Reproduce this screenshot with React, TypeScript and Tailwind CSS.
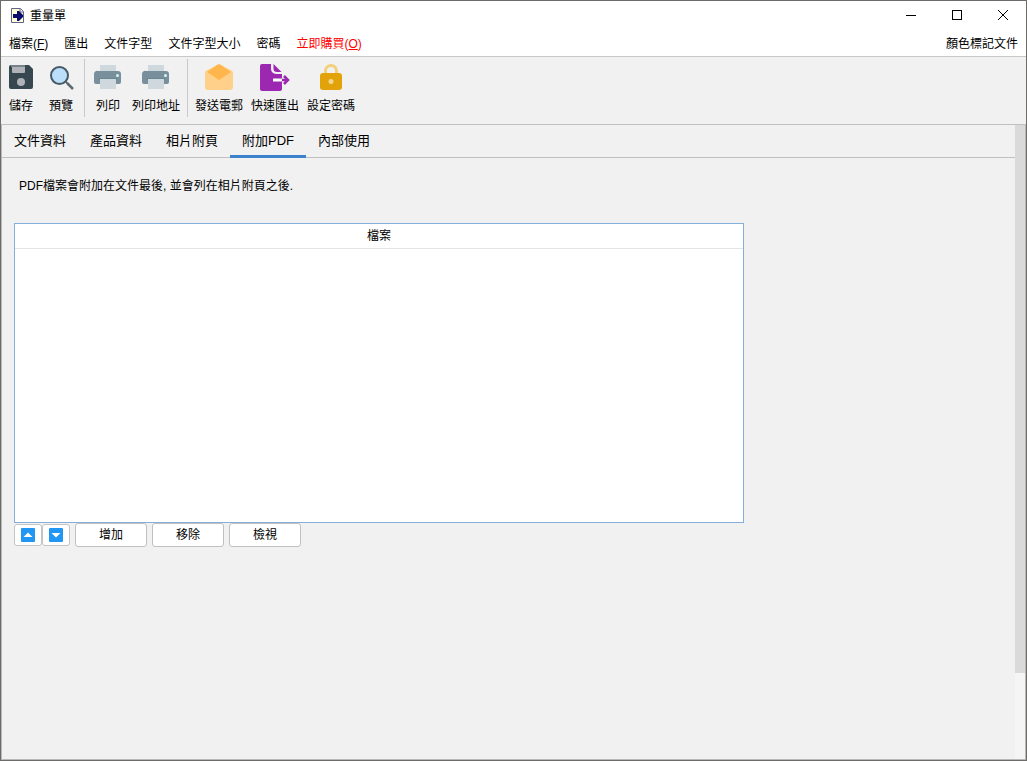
import React, { useState } from "react";

const tabs = ["文件資料", "產品資料", "相片附頁", "附加PDF", "內部使用"];

const menus = ["匯出", "文件字型", "文件字型大小", "密碼"];

const AppIcon = () => (
  <svg width="13" height="15" viewBox="0 0 13 15">
    <path d="M.5.5h9l3 3v11H.5z" fill="#fffdd8" stroke="#62628a" />
    <path d="M9 1v3h3" fill="#fff" stroke="#62628a" />
    <path d="M2 6h4V3h2l4 4v2l-4 4H6v-3H2z" fill="#0c0c6c" />
  </svg>
);

const SaveIcon = () => (
  <svg width="24" height="24" viewBox="0 0 24 24">
    <path d="M2 0h18l4 4v18a2 2 0 0 1-2 2H2a2 2 0 0 1-2-2V2a2 2 0 0 1 2-2z" fill="#37474f" />
    <path d="M3 0h13v7a1 1 0 0 1-1 1H4a1 1 0 0 1-1-1z" fill="#b0b2b8" />
    <path d="M2 0h14v2H2z" fill="#78828a" />
    <circle cx="12" cy="17" r="4" fill="#b0b2b8" />
  </svg>
);

const PreviewIcon = () => (
  <svg width="24" height="24" viewBox="0 0 24 24" className="overflow-visible">
    <path d="M17 17l3 3" stroke="#616161" strokeWidth="2" />
    <path d="M18.500 18.500l5.500 5.500" stroke="#5b6b75" strokeWidth="2.500" />
    <circle cx="10.500" cy="10.500" r="8.500" fill="#bbdefb" stroke="#455a64" strokeWidth="2" />
  </svg>
);

const PrintIcon = () => (
  <svg width="28" height="24" viewBox="0 0 28 24">
    <path d="M6 0h16v8H6z" fill="#cfd8dc" />
    <path d="M4 6h20a3 3 0 0 1 3 3v8a2 2 0 0 1-2 2H2a2 2 0 0 1-2-2V9a3 3 0 0 1 4-3z" fill="#78909c" />
    <path d="M5 13h18v2H5z" fill="#6b8592" />
    <path d="M6 14h16v10H6z" fill="#cfd8dc" />
    <circle cx="23.500" cy="10.500" r="1.500" fill="#d9f3f5" />
  </svg>
);

const MailIcon = () => (
  <svg width="28" height="26" viewBox="0 0 28 26">
    <path d="M1.500 6.500L12.500.7a3 3 0 0 1 3 0l11 5.800A3 3 0 0 1 28 9v14a3 3 0 0 1-3 3H3a3 3 0 0 1-3-3V9a3 3 0 0 1 1.500-2.500z" fill="#ffd08a" />
    <path d="M2 8L12.500.7a3 3 0 0 1 3 0L26 8l-12 8z" fill="#ffb74d" />
  </svg>
);

const ExportIcon = () => (
  <svg width="30" height="27" viewBox="0 0 30 27">
    <path d="M2 0h9v5a5 5 0 0 0 5 5h6v15a2 2 0 0 1-2 2H2a2 2 0 0 1-2-2V2a2 2 0 0 1 2-2z" fill="#9c27b0" />
    <path d="M13.500 0l8 8H17a3.500 3.500 0 0 1-3.500-3.500z" fill="#9c27b0" />
    <path d="M13 14.500h9v3h-9z" fill="#fff" />
    <path d="M22 16h6M24 12l4 4-4 4" fill="none" stroke="#9c27b0" strokeWidth="2.500" />
  </svg>
);

const LockIcon = () => (
  <svg width="22" height="26" viewBox="0 0 22 26">
    <path d="M5.500 11V7a5.500 5.500 0 0 1 11 0v4" fill="none" stroke="#f3cf7a" strokeWidth="3" />
    <rect y="9" width="22" height="17" rx="3" fill="#e2a30a" />
    <circle cx="11" cy="17.500" r="2.500" fill="#f3d68f" />
  </svg>
);

const ArrowIcon = ({ down = false }: { down?: boolean }) => (
  <svg width="14" height="14" viewBox="0 0 14 14">
    <rect width="14" height="14" rx="1" fill="#2196f3" />
    <path d={down ? "M2.500 5h9L7 9.500z" : "M2.500 9h9L7 4.500z"} fill="#fff" />
  </svg>
);

interface ToolButtonProps {
  label: string;
  children: React.ReactNode;
}

const ToolButton: React.FC<ToolButtonProps> = ({ label, children }) => (
  <button type="button" className="flex min-w-10 flex-col items-center px-1">
    <span className="flex h-8 items-center justify-center">{children}</span>
    <span className="mt-[5px] text-xs whitespace-nowrap">{label}</span>
  </button>
);

const Separator = () => <div className="mx-[3px] h-[58px] w-px shrink-0 bg-[#c8c8c8]" />;

const smallButton =
  "flex h-[22px] w-7 items-center justify-center rounded-[3px] border border-[#c4c4c4] bg-white";
const textButton =
  "h-6 w-[72px] rounded-[3px] border border-[#c0c0c0] bg-white text-center text-xs";

export default function App() {
  const [activeTab, setActiveTab] = useState("附加PDF");

  return (
    <div className="flex min-h-screen flex-col border border-[#6e6b6b] bg-[#f1f1f1] font-['Liberation_Sans','Noto_Sans_CJK_TC',sans-serif] text-xs text-black">
      <header className="border-b border-[#c8c8c8] bg-white">
        <div className="flex h-7 items-center pl-2.5">
          <AppIcon />
          <h1 className="ml-1.5 flex-1 pt-0.5">重量單</h1>
          <button type="button" aria-label="最小化" className="flex h-7 w-[46px] items-center justify-center">
            <svg width="10" height="10" shapeRendering="crispEdges">
              <path d="M0 5.500h10" stroke="#000" />
            </svg>
          </button>
          <button type="button" aria-label="最大化" className="flex h-7 w-[46px] items-center justify-center">
            <svg width="10" height="10" shapeRendering="crispEdges">
              <path d="M.5.5h9v9h-9z" fill="none" stroke="#000" />
            </svg>
          </button>
          <button type="button" aria-label="關閉" className="flex h-7 w-[46px] items-center justify-center">
            <svg width="10" height="10">
              <path d="M0 0l10 10M10 0L0 10" stroke="#000" />
            </svg>
          </button>
        </div>
        <nav className="flex h-[27px] items-center gap-4 px-2 pt-0.5">
          <button type="button">
            檔案(<u>F</u>)
          </button>
          {menus.map((menu) => (
            <button key={menu} type="button">
              {menu}
            </button>
          ))}
          <button type="button" className="text-[#ff0000]">
            立即購買(<u>O</u>)
          </button>
          <button type="button" className="ml-auto">
            顏色標記文件
          </button>
        </nav>
      </header>

      <div className="flex h-[68px] items-start border-b border-[#c0c0c0] pt-0.5">
        <div className="flex pt-0.5">
          <ToolButton label="儲存"><SaveIcon /></ToolButton>
          <ToolButton label="預覽"><PreviewIcon /></ToolButton>
        </div>
        <Separator />
        <div className="flex pt-0.5">
          <ToolButton label="列印"><PrintIcon /></ToolButton>
          <ToolButton label="列印地址"><PrintIcon /></ToolButton>
        </div>
        <Separator />
        <div className="flex pt-0.5">
          <ToolButton label="發送電郵"><MailIcon /></ToolButton>
          <ToolButton label="快速匯出"><ExportIcon /></ToolButton>
          <ToolButton label="設定密碼"><LockIcon /></ToolButton>
        </div>
      </div>

      <div className="flex flex-1 border-x border-b border-[#b8b8b8]">
        <main className="min-w-0 flex-1">
          <div role="tablist" className="flex h-[33px] border-b border-[#c0c0c0]">
            {tabs.map((tab) => (
              <button
                key={tab}
                type="button"
                role="tab"
                aria-selected={tab === activeTab}
                onClick={() => setActiveTab(tab)}
                className={
                  tab === activeTab
                    ? "-mb-px w-[76px] border-b-3 border-[#3c82cc] pt-0.5 text-[13px]"
                    : "-mb-px w-[76px] border-b-3 border-transparent pt-0.5 text-[13px]"
                }
              >
                {tab}
              </button>
            ))}
          </div>

          <div className="px-3">
            <p className="mt-5 mb-[29px] pl-[5px]">PDF檔案會附加在文件最後, 並會列在相片附頁之後.</p>
            <div className="h-[300px] w-full max-w-[730px] border border-[#86aedb] bg-white">
              <table className="w-full">
                <thead>
                  <tr className="h-6 border-b border-[#e4e4e4]">
                    <th className="font-normal">檔案</th>
                  </tr>
                </thead>
                <tbody />
              </table>
            </div>
            <div className="flex items-center gap-[5px]">
              <div className="flex">
                <button type="button" aria-label="上移" className={smallButton}>
                  <ArrowIcon />
                </button>
                <button type="button" aria-label="下移" className={smallButton}>
                  <ArrowIcon down />
                </button>
              </div>
              <button type="button" className={textButton}>增加</button>
              <button type="button" className={textButton}>移除</button>
              <button type="button" className={textButton}>檢視</button>
            </div>
          </div>
        </main>
        <div className="w-2.5 shrink-0 bg-[#f5f5f5]">
          <div className="h-[548px] bg-[#dadada]" />
        </div>
      </div>
    </div>
  );
}
